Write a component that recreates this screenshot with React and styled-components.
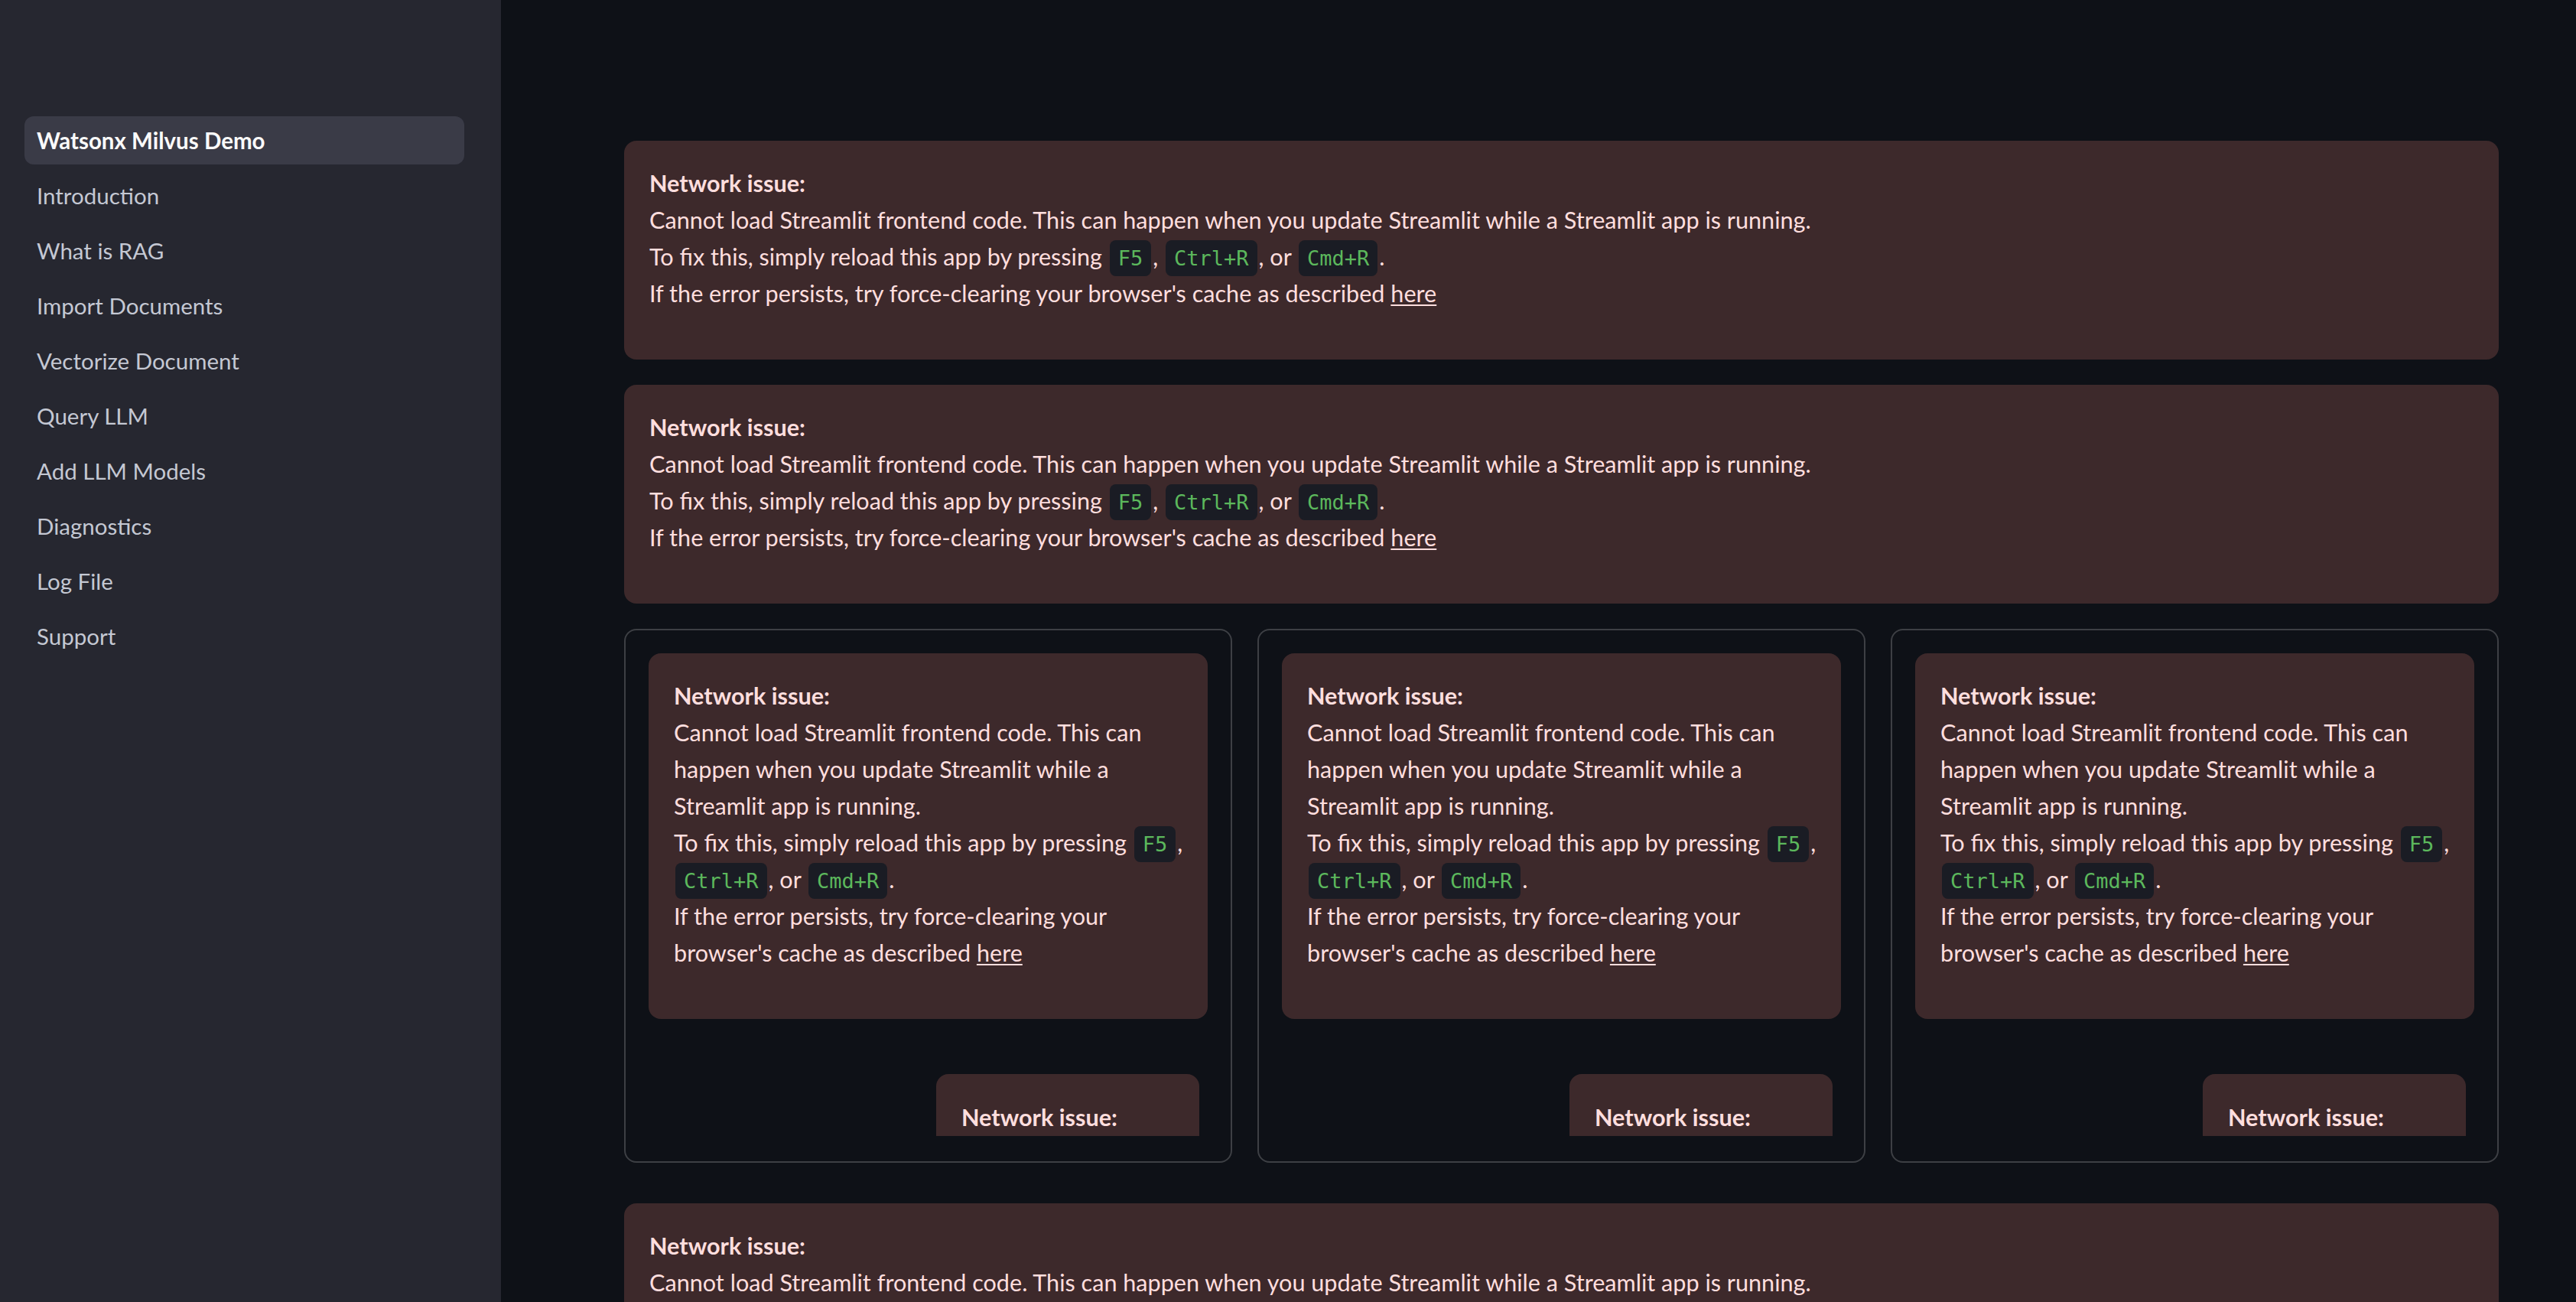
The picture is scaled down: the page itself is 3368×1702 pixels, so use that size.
import styled, { createGlobalStyle } from 'styled-components';

const GlobalStyle = createGlobalStyle`
  html, body {
    margin: 0;
    padding: 0;
    background: #0e1117;
    overflow: hidden;
  }
  * {
    box-sizing: border-box;
  }
`;

const NAV_ITEMS = [
  'Watsonx Milvus Demo',
  'Introduction',
  'What is RAG',
  'Import Documents',
  'Vectorize Document',
  'Query LLM',
  'Add LLM Models',
  'Diagnostics',
  'Log File',
  'Support',
];

const Page = styled.div`
  display: flex;
  width: 3368px;
  height: 1702px;
  overflow: hidden;
  font-family: Lato, 'Noto Sans', sans-serif;
`;

const Sidebar = styled.nav`
  flex: 0 0 655px;
  background: #262730;
  padding: 152px 48px 0 32px;
  display: flex;
  flex-direction: column;
  gap: 9px;
`;

const NavLink = styled.a`
  display: flex;
  align-items: center;
  height: 63px;
  padding: 0 16px;
  border-radius: 12px;
  font-size: 29.5px;
  font-weight: ${({ active }) => (active ? 700 : 400)};
  color: ${({ active }) => (active ? '#fafafa' : '#c4c8d3')};
  background: ${({ active }) => (active ? '#3a3b47' : 'transparent')};
  text-decoration: none;
`;

const Main = styled.main`
  flex: 1;
  padding: 184px 101px 0 161px;
  display: flex;
  flex-direction: column;
  gap: 33px;
`;

const Alert = styled.div`
  flex: none;
  background: #3d292b;
  color: #ffdede;
  border-radius: 16px;
  padding: 32px 32px 62px 33px;
  font-size: 30.6px;
  line-height: 48px;
`;

const SmallAlert = styled(Alert)`
  width: 344px;
  margin: 72px 11px 0 auto;
  padding-top: 33px;
  border-radius: 16px 16px 0 0;
`;

const Title = styled.div`
  font-weight: 700;
`;

const Line = styled.div``;

const Code = styled.code`
  font-family: 'DejaVu Sans Mono', 'Liberation Mono', monospace;
  font-size: 27px;
  line-height: 1;
  padding: 8px 11px;
  margin: 0 2px;
  border-radius: 8px;
  background: #1a1c24;
  color: #5cb85c;
`;

const Link = styled.a`
  color: inherit;
  text-decoration: underline;
  text-decoration-thickness: 2px;
  text-underline-offset: 3px;
`;

const Columns = styled.div`
  flex: none;
  display: grid;
  grid-template-columns: repeat(3, 1fr);
  gap: 33px;
  margin-bottom: 20px;
`;

const Column = styled.div`
  height: 698px;
  border: 2px solid rgba(250, 250, 250, 0.2);
  border-radius: 16px;
  padding: 30px 30px 33px 30px;
`;

const ColumnInner = styled.div`
  height: 100%;
  overflow: hidden;
  display: flex;
  flex-direction: column;
`;

const ErrorBody = () => (
  <>
    <Title>Network issue:</Title>
    <Line>
      Cannot load Streamlit frontend code. This can happen when you update Streamlit while a Streamlit app is
      running.
    </Line>
    <Line>
      To fix this, simply reload this app by pressing <Code>F5</Code>, <Code>Ctrl+R</Code>, or{' '}
      <Code>Cmd+R</Code>.
    </Line>
    <Line>
      If the error persists, try force-clearing your browser's cache as described <Link href="#">here</Link>
    </Line>
  </>
);

const App = () => (
  <Page>
    <GlobalStyle />
    <Sidebar>
      {NAV_ITEMS.map((item, i) => (
        <NavLink key={item} href="#" active={i === 0 ? 1 : 0}>
          {item}
        </NavLink>
      ))}
    </Sidebar>
    <Main>
      <Alert>
        <ErrorBody />
      </Alert>
      <Alert>
        <ErrorBody />
      </Alert>
      <Columns>
        {[0, 1, 2].map(col => (
          <Column key={col}>
            <ColumnInner>
              <Alert>
                <ErrorBody />
              </Alert>
              <SmallAlert>
                <Title>Network issue:</Title>
              </SmallAlert>
            </ColumnInner>
          </Column>
        ))}
      </Columns>
      <Alert>
        <ErrorBody />
      </Alert>
    </Main>
  </Page>
);

export default App;
